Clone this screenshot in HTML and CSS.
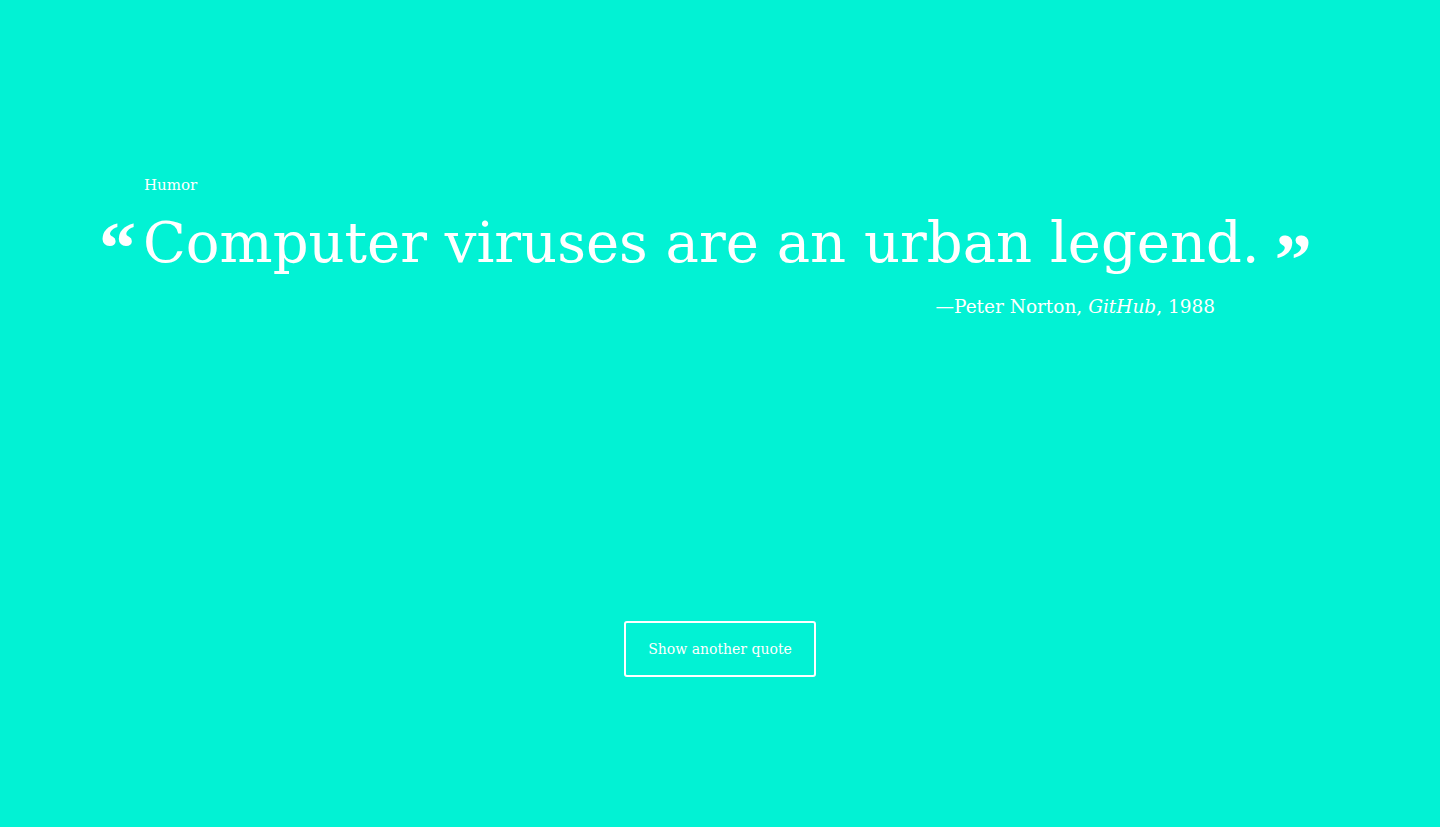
FILE: index.html
```html
<!DOCTYPE html>
<html lang="en">
<head>
<meta charset="utf-8">
<title>Quote</title>
<link rel="stylesheet" href="styles.css">
</head>
<body>
<main class="page">
  <figure class="quote">
    <div class="category">Humor</div>
    <div class="quote-row">
      <span class="mark mark-open">&ldquo;</span>
      <blockquote class="quote-text">Computer viruses are an urban legend.</blockquote>
      <span class="mark mark-close">&rdquo;</span>
    </div>
    <figcaption class="attribution">&mdash;Peter Norton, <cite>GitHub</cite>, 1988</figcaption>
  </figure>
  <div class="actions">
    <button class="btn" type="button">Show another quote</button>
  </div>
</main>
</body>
</html>
```
FILE: styles.css
```css
html, body {
  margin: 0;
  padding: 0;
  height: 100%;
}
body {
  background: #02f2d4;
  color: #ffffff;
  font-family: "DejaVu Serif", "Liberation Serif", serif;
}
.page {
  display: flex;
  flex-direction: column;
  min-height: 100%;
  box-sizing: border-box;
  padding-top: 176px;
}
.quote {
  margin: 0;
  padding-left: 100px;
  width: 1210px;
}
.category {
  font-size: 15px;
  line-height: 18px;
  padding-left: 44px;
}
.quote-row {
  display: flex;
  align-items: flex-start;
  margin-top: 14px;
}
.quote-row > * {
  flex-shrink: 0;
}
.mark {
  font-family: "Liberation Serif", serif;
  font-size: 74px;
  font-weight: bold;
  line-height: 1;
}
.mark-open {
  width: 44px;
  margin-top: 3px;
  margin-left: -1px;
}
.mark-close {
  margin-left: 15px;
  margin-top: 15px;
}
.quote-text {
  margin: 0;
  font-size: 56px;
  line-height: 70px;
  white-space: nowrap;
}
.attribution {
  text-align: right;
  font-size: 18.5px;
  line-height: 24px;
  margin-top: -2px;
  padding-right: 95px;
}
.attribution cite {
  font-style: italic;
}
.actions {
  display: flex;
  justify-content: center;
  margin-top: 302px;
}
.btn {
  background: transparent;
  color: #ffffff;
  border: 2px solid #ffffff;
  border-radius: 3px;
  font-family: "DejaVu Serif", "Liberation Serif", serif;
  font-size: 14px;
  width: 192px;
  height: 56px;
  padding: 0;
  cursor: pointer;
}
```
